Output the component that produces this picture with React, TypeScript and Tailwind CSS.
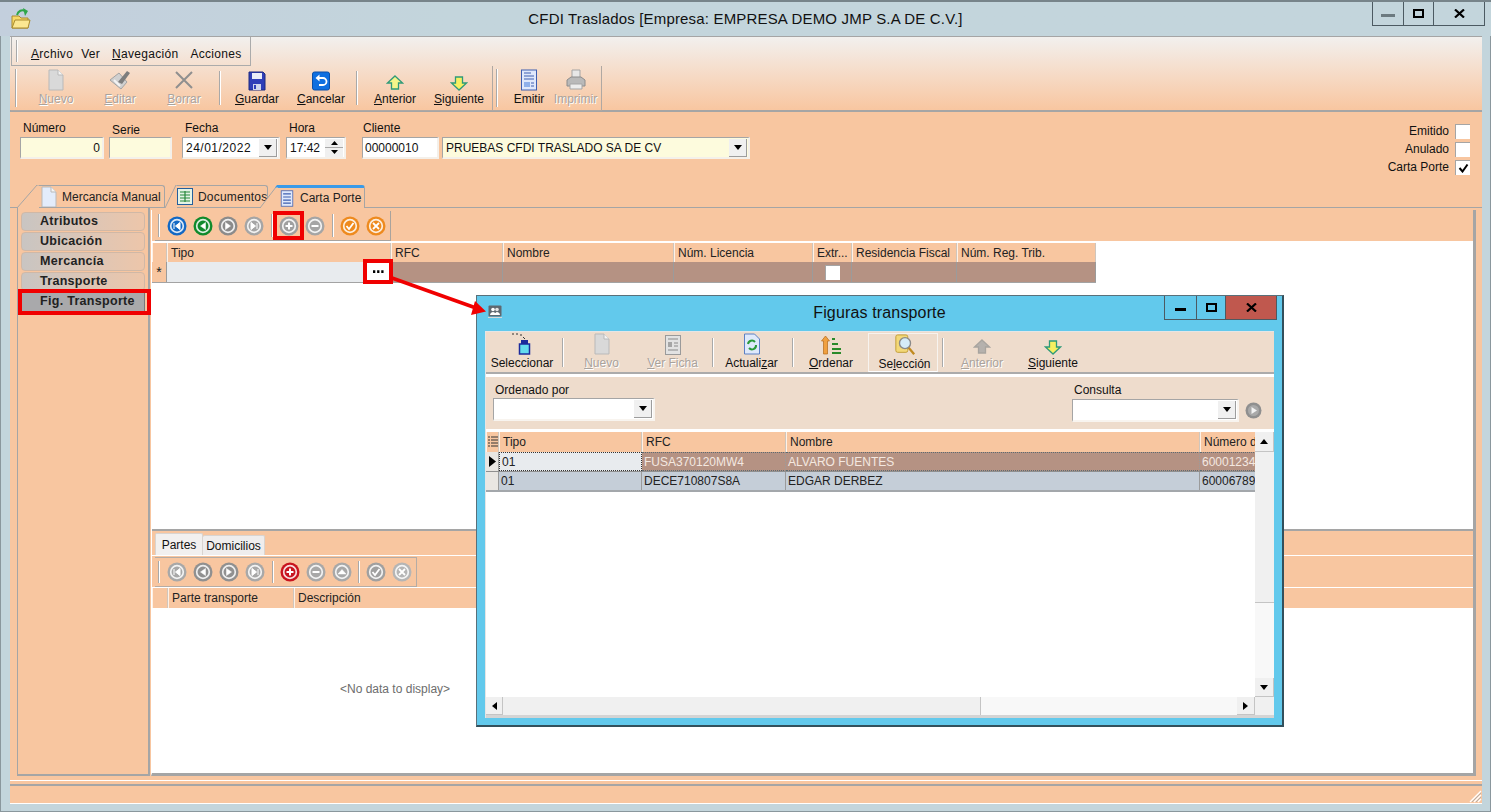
import React from "react";

const FONT = "font-['Liberation_Sans',Arial,sans-serif]";

/* ---------- small drawings ---------- */

const PageIcon = ({ c = "#d9d9d9" }: { c?: string }) => (
  <svg width="20" height="22" viewBox="0 0 20 22" className="shrink-0">
    <path d="M3 1h9l5 5v15H3z" fill={c} stroke="#b9b9b9" />
    <path d="M12 1v5h5" fill="#f5f5f5" stroke="#b9b9b9" />
  </svg>
);

const EditIcon = () => (
  <svg width="22" height="22" viewBox="0 0 22 22">
    <path d="M1 11l9-7 8 9-6 7z" fill="#d0d0d0" stroke="#a3a3a3" />
    <path d="M9 13l9-11 3 2-8 11z" fill="#7d7d7d" />
    <path d="M5 11l6 6" stroke="#f4f4f4" strokeWidth="2" />
  </svg>
);

const CrossIcon = () => (
  <svg width="22" height="22" viewBox="0 0 22 22">
    <path d="M3 3l16 16M19 3L3 19" stroke="#8f8f8f" strokeWidth="2" />
  </svg>
);

const FloppyIcon = () => (
  <svg width="18" height="20" viewBox="0 0 18 20">
    <path d="M1 1h14l2 2v16H1z" fill="#2f3fb8" stroke="#1d2a80" />
    <rect x="4" y="2" width="10" height="6" fill="#e9edf8" />
    <rect x="5" y="13" width="8" height="6" fill="#cfd6ec" />
    <rect x="6" y="14" width="2" height="4" fill="#2f3fb8" />
  </svg>
);

const UndoIcon = () => (
  <svg width="18" height="20" viewBox="0 0 18 20">
    <rect x="0.5" y="1" width="17" height="18" rx="2" fill="#0f6fe0" stroke="#0b4fa8" />
    <path d="M6 7h5a3 3 0 0 1 0 7H7" fill="none" stroke="#fff" strokeWidth="1.8" />
    <path d="M7.5 3.5v7L3.5 7z" fill="#fff" />
  </svg>
);

const UpArrow = ({ fill = "#f5f58a", line = "#2e9a78" }: { fill?: string; line?: string }) => (
  <svg width="18" height="16" viewBox="0 0 18 16">
    <path d="M9 1l7.5 7H12.5v6h-7V8H1.500z" fill={fill} stroke={line} strokeWidth="1.300" />
  </svg>
);

const DownArrow = () => (
  <svg width="18" height="16" viewBox="0 0 18 16">
    <path d="M9 15L1.500 8H5.500V2h7v6h4z" fill="#f7f060" stroke="#2e9a78" strokeWidth="1.300" />
  </svg>
);

const EmitIcon = () => (
  <svg width="18" height="22" viewBox="0 0 18 22">
    <rect x="1.500" y="1" width="15" height="20" fill="#dfe8fb" stroke="#3e5eb0" />
    <path d="M4 4h7M4 7h10M4 10h10" stroke="#3e5eb0" />
    <rect x="4" y="13" width="6" height="5" fill="#8fb0ea" />
    <path d="M11 14h3M11 17h3" stroke="#3e5eb0" />
  </svg>
);

const PrinterIcon = () => (
  <svg width="24" height="22" viewBox="0 0 24 22">
    <path d="M8 1h8v8H8z" fill="#e7e7e7" stroke="#a5a5a5" />
    <path d="M3 11l4-3h10l4 3v6H3z" fill="#b9b9b9" stroke="#8c8c8c" />
    <path d="M6 15h12v5H6z" fill="#ececec" stroke="#a5a5a5" />
  </svg>
);

const SelectIcon = () => (
  <svg width="24" height="22" viewBox="0 0 24 22">
    <path d="M2 1h2M6 1h2M10 2h2M13 4l2 2" stroke="#333" strokeWidth="1" />
    <rect x="11" y="7" width="7" height="4" fill="#1b2a9c" />
    <rect x="9.500" y="11" width="10" height="10" fill="#64dcee" stroke="#1b2a9c" strokeWidth="1.500" />
  </svg>
);

const FichaIcon = () => (
  <svg width="16" height="20" viewBox="0 0 16 20">
    <rect x="0.500" y="0.500" width="15" height="19" fill="#e2e2e2" stroke="#9a9a9a" />
    <path d="M3 4h10M3 15h10M9 8h4M9 11h4" stroke="#8a8a8a" />
    <rect x="3" y="7" width="4" height="5" fill="#a5a5a5" />
  </svg>
);

const RefreshIcon = () => (
  <svg width="18" height="22" viewBox="0 0 18 22">
    <path d="M1.500 1h10l5 5v15h-15z" fill="#dfe9fb" stroke="#5c80c4" />
    <path d="M5 11a4 4 0 0 1 7-2" fill="none" stroke="#2a9a3a" strokeWidth="2" />
    <path d="M13 12a4 4 0 0 1-7 3" fill="none" stroke="#2a9a3a" strokeWidth="2" />
  </svg>
);

const SortIcon = () => (
  <svg width="22" height="20" viewBox="0 0 22 20">
    <path d="M5.500 1l4 5H7.500v13h-4V6h-2z" fill="#f0a040" stroke="#b46a18" strokeWidth="0.700" />
    <path d="M12 4h3M12 9h6M12 14h9M12 18h9" stroke="#2a8a2a" strokeWidth="2" />
  </svg>
);

const FindIcon = () => (
  <svg width="22" height="22" viewBox="0 0 22 24">
    <rect x="1" y="1" width="13" height="19" rx="2" fill="#f3d878" stroke="#c09a30" />
    <circle cx="11" cy="10" r="6" fill="#d5ecf8" stroke="#8a8a8a" strokeWidth="1.500" />
    <path d="M15 15l6 7" stroke="#c08a20" strokeWidth="2.500" />
  </svg>
);

const FolderIcon = () => (
  <svg width="20" height="22" viewBox="0 0 20 22">
    <path d="M1 8h7l2 2h7v10H1z" fill="#f7d866" stroke="#a98a2c" />
    <path d="M1 20l3-8h15l-2 8z" fill="#fbe792" stroke="#a98a2c" />
    <path d="M6 7c1-4 5-6 8-4" fill="none" stroke="#2fa64a" strokeWidth="2" />
    <path d="M12 0l5 3-3 5z" fill="#2fa64a" />
  </svg>
);

const PeopleIcon = () => (
  <svg width="14" height="13" viewBox="0 0 14 13">
    <rect x="0.500" y="0.500" width="13" height="11" rx="1" fill="#5f6870" />
    <circle cx="5" cy="4.500" r="1.800" fill="#fff" />
    <circle cx="9" cy="4.500" r="1.800" fill="#e4e4e4" />
    <path d="M2 10c0-2 2-3 3-3s3 1 3 3zM7 10c0-2 1-3 2-3s3 1 3 3z" fill="#fff" />
    <path d="M0 12.500h14" stroke="#d8d8d8" />
  </svg>
);

const TableDocIcon = () => (
  <svg width="16" height="17" viewBox="0 0 16 17" className="shrink-0">
    <rect x="0.500" y="0.500" width="15" height="16" fill="#e5f3e5" stroke="#255f9c" />
    <path d="M3 4h10M3 7h10M3 10h10M3 13h10M8 3v11" stroke="#27873a" strokeWidth="1.200" />
  </svg>
);

const Caret = ({ dir = "down" }: { dir?: "down" | "up" | "left" | "right" }) => {
  const d = { down: "M0 0h8L4 5z", up: "M0 5h8L4 0z", left: "M5 0v8L0 4z", right: "M0 0v8l5-4z" }[dir];
  const vert = dir === "down" || dir === "up";
  return (
    <svg width={vert ? 8 : 5} height={vert ? 5 : 8} viewBox={vert ? "0 0 8 5" : "0 0 5 8"}>
      <path d={d} fill="#000" />
    </svg>
  );
};

type Glyph = "first" | "prev" | "next" | "last" | "plus" | "minus" | "up" | "check" | "x";

const Ball = ({ base, glyph, ring = "#fff" }: { base: string; glyph: Glyph; ring?: string }) => (
  <svg width="20" height="20" viewBox="0 0 20 20" className="shrink-0">
    <circle cx="10" cy="10" r="9.500" fill={base} />
    <circle cx="10" cy="10" r="6.300" fill="none" stroke={ring} strokeWidth="1.700" opacity="0.850" />
    <g fill="#fff" stroke="#fff">
      {glyph === "first" && <path d="M7 7v6M13 6.500v7L8.500 10z" strokeWidth="1" />}
      {glyph === "prev" && <path d="M12.500 6.500v7L7.500 10z" strokeWidth="0.500" />}
      {glyph === "next" && <path d="M7.500 6.500v7l5-3.500z" strokeWidth="0.500" />}
      {glyph === "last" && <path d="M13 7v6M7 6.500v7l4.500-3.500z" strokeWidth="1" />}
      {glyph === "plus" && <path d="M6.500 10h7M10 6.500v7" strokeWidth="2" />}
      {glyph === "minus" && <path d="M6.500 10h7" strokeWidth="2" />}
      {glyph === "up" && <path d="M6 12l4-4.500 4 4.500z" strokeWidth="0.500" />}
      {glyph === "check" && <path d="M6.500 10l2.500 3 4.500-6" strokeWidth="1.800" fill="none" />}
      {glyph === "x" && <path d="M7 7l6 6M13 7l-6 6" strokeWidth="1.800" fill="none" />}
    </g>
  </svg>
);

/* ---------- toolbar pieces ---------- */

const Grip = () => <div className="w-[2px] h-[calc(100%-6px)] my-auto border-l border-[#a9a9a9] bg-white shrink-0" />;
const Sep = ({ className = "" }: { className?: string }) => (
  <div className={`w-[2px] self-stretch my-[5px] border-l border-[#a9a9a9] bg-white shrink-0 ${className}`} />
);

const ToolBtn = ({
  icon,
  label,
  u,
  off,
  tight,
  className = "",
}: {
  icon: React.ReactNode;
  label: string;
  u?: number;
  off?: boolean;
  tight?: boolean;
  className?: string;
}) => (
  <div className={`flex flex-col items-center shrink-0 ${className}`}>
    <div className={`flex items-end justify-center ${tight ? "h-[22px]" : "h-[25px]"}`}>{icon}</div>
    <span
      className={`text-[12px] leading-[14px] mt-[1px] whitespace-nowrap ${off ? "text-[#a9a39d] [text-shadow:1px_1px_0_#fff]" : "text-[#111]"}`}
    >
      {u === undefined ? (
        label
      ) : (
        <>
          {label.slice(0, u)}
          <u>{label[u]}</u>
          {label.slice(u + 1)}
        </>
      )}
    </span>
  </div>
);

const DropBtn = () => (
  <div className="w-[18px] h-[18px] bg-[#f0f0f0] border-r border-b border-[#9d9d9d] flex items-center justify-center shrink-0">
    <Caret />
  </div>
);

const Field = ({
  label,
  className = "",
  labelClass = "",
  children,
}: {
  label: string;
  className?: string;
  labelClass?: string;
  children: React.ReactNode;
}) => (
  <div className={`flex flex-col shrink-0 ${className}`}>
    <span className={`text-[12px] leading-[14px] h-[16px] text-[#111] pl-[3px] ${labelClass}`}>{label}</span>
    {children}
  </div>
);

const inputBox = "h-[22px] border-t border-l border-[#a5a5a5] border-r-2 border-b-2 border-r-[#f4f0ea] border-b-[#f4f0ea] flex items-center text-[12px] text-[#111]";

const Check = ({ label, on }: { label: string; on?: boolean }) => (
  <div className="flex items-center justify-end gap-[6px] h-[18px]">
    <span className="text-[12px] text-[#111]">{label}</span>
    <div className="w-[15px] h-[15px] bg-white border-t border-l border-[#a5a5a5] flex items-center justify-center">
      {on && (
        <svg width="11" height="10" viewBox="0 0 11 10">
          <path d="M1.500 5l3 3.500 5-7" fill="none" stroke="#000" strokeWidth="2" />
        </svg>
      )}
    </div>
  </div>
);

const NavItem = ({ label, active }: { label: string; active?: boolean }) => (
  <div
    className={`flex items-center pl-[18px] text-[12.500px] font-bold text-[#222] tracking-[0.3px] ${
      active
        ? "bg-[#a9a9ab] h-[21px] -mt-px border border-[#77777a]"
        : "h-[19px] rounded-[4px] bg-gradient-to-r from-[#c9c5c2] to-[#edc6aa] border border-[#d0b8a6]"
    }`}
  >
    {label}
  </div>
);

const HeadCell = ({ className = "", children }: { className?: string; children?: React.ReactNode }) => (
  <div className={`h-full shrink-0 border-l border-r border-l-[#fff1e5] border-r-[#cfc6bd] pl-[3px] flex items-center text-[12px] text-[#222] whitespace-nowrap overflow-hidden ${className}`}>
    {children}
  </div>
);

const RowCell = ({ className = "", children }: { className?: string; children?: React.ReactNode }) => (
  <div className={`h-full shrink-0 border-r border-[#9b9b9b] flex items-center text-[12px] whitespace-nowrap overflow-hidden pl-[2px] ${className}`}>
    {children}
  </div>
);

const WinBtn = ({ className = "", children }: { className?: string; children: React.ReactNode }) => (
  <div className={`flex items-center justify-center border border-[#4c5a62] -ml-px ${className}`}>{children}</div>
);

const CloseGlyph = () => (
  <svg width="11" height="9" viewBox="0 0 11 9">
    <path d="M1 0.500l9 8M10 0.500l-9 8" stroke="#000" strokeWidth="2.200" />
  </svg>
);

const ScrollBtn = ({ dir, className = "" }: { dir: "up" | "down" | "left" | "right"; className?: string }) => (
  <div className={`bg-[#f0f0f0] border-r border-b border-[#c4c4c4] flex items-center justify-center shrink-0 ${className}`}>
    <Caret dir={dir} />
  </div>
);

/* ---------- dialog ---------- */

const FigurasDialog = () => (
  <div className="absolute left-[476px] top-[293px] w-[808px] h-[432px] bg-[#62c9ec] border-t border-l border-[#59707a] border-r-2 border-b-2 border-r-[#33505c] border-b-[#33505c] flex flex-col z-10">
    <div className="h-[35px] shrink-0 grid grid-cols-[1fr_auto_1fr] items-start">
      <div className="pl-[11px] pt-[9px]">
        <PeopleIcon />
      </div>
      <div className="text-[16px] leading-[20px] pt-[7px] text-[#111] tracking-[0.15px]">Figuras transporte</div>
      <div className="flex justify-end pr-[5px]">
        <WinBtn className="w-[33px] h-[24px] border-t-0">
          <div className="w-[11px] h-[3px] bg-black mt-[4px]" />
        </WinBtn>
        <WinBtn className="w-[30px] h-[24px] border-t-0">
          <div className="w-[11px] h-[9px] border-2 border-black" />
        </WinBtn>
        <WinBtn className="w-[52px] h-[24px] border-t-0 bg-[#c0584e]">
          <CloseGlyph />
        </WinBtn>
      </div>
    </div>
    <div className="flex-1 mx-[8px] mb-[7px] flex flex-col bg-white border-l border-t border-[#e5e5e5]">
      <div className="h-[42px] shrink-0 bg-[#eedccc] border-b-2 border-[#ababab] flex pl-[1px] pt-[1px]">
        <ToolBtn tight className="w-[70px]" icon={<SelectIcon />} label="Seleccionar" />
        <Sep className="my-[2px] ml-[5px]" />
        <ToolBtn tight className="w-[75px]" icon={<PageIcon />} label="Nuevo" u={0} off />
        <ToolBtn tight className="w-[67px]" icon={<FichaIcon />} label="Ver Ficha" u={0} off />
        <Sep className="my-[2px] ml-[6px]" />
        <ToolBtn tight className="w-[75px]" icon={<RefreshIcon />} label="Actualizar" u={7} />
        <Sep className="my-[2px] ml-[3px]" />
        <ToolBtn tight className="w-[74px]" icon={<SortIcon />} label="Ordenar" u={0} />
        <ToolBtn tight className="w-[70px] pl-[3px] border border-[#f7f3ef] border-b-white" icon={<FindIcon />} label="Selección" u={2} />
        <Sep className="my-[2px] ml-[4px]" />
        <ToolBtn tight className="w-[76px]" icon={<UpArrow fill="#b5b1ad" line="#a8a49f" />} label="Anterior" u={0} off />
        <ToolBtn tight className="w-[66px]" icon={<DownArrow />} label="Siguiente" u={0} />
      </div>
      <div className="h-[52px] mt-[3px] shrink-0 bg-[#eedccc] flex justify-between pl-[7px] pr-[12px] pt-[6px]">
        <div className="flex flex-col">
          <span className="text-[12px] leading-[14px] h-[15px] text-[#111] pl-[2px]">Ordenado por</span>
          <div className="w-[162px] h-[23px] bg-white border-t border-l border-[#a5a5a5] border-r-2 border-b-2 border-r-[#f8f4ef] border-b-[#f8f4ef] flex justify-end items-center pr-[1px]">
            <DropBtn />
          </div>
        </div>
        <div className="flex items-start gap-[6px]">
          <div className="flex flex-col">
            <span className="text-[12px] leading-[14px] h-[16px] text-[#111] pl-[2px]">Consulta</span>
            <div className="w-[167px] h-[23px] bg-white border-t border-l border-[#a5a5a5] border-r-2 border-b-2 border-r-[#f8f4ef] border-b-[#f8f4ef] flex justify-end items-center pr-[1px]">
              <DropBtn />
            </div>
          </div>
          <div className="mt-[19px]">
            <svg width="17" height="17" viewBox="0 0 17 17">
              <circle cx="8.500" cy="8.500" r="8" fill="#8f8f8f" />
              <circle cx="8.500" cy="8.500" r="5.500" fill="#a9a9a9" />
              <path d="M6.500 5v7l5.500-3.500z" fill="#f2f2f2" />
            </svg>
          </div>
        </div>
      </div>
      <div className="flex-1 mt-[3px] grid grid-cols-[1fr_19px] grid-rows-[1fr_18px] border-b-[3px] border-[#d4d4d4] min-h-0">
        <div className="min-w-0 overflow-hidden flex flex-col">
          <div className="h-[20px] bg-[#f8c6a0] flex shrink-0">
            <HeadCell className="w-[13px] !pl-[1px]">
              <svg width="10" height="12" viewBox="0 0 10 12">
                <path d="M0 1h2M3 1h7M0 4h2M3 4h7M0 7h2M3 7h7M0 10h2M3 10h7" stroke="#333" strokeWidth="1.200" />
              </svg>
            </HeadCell>
            <HeadCell className="w-[143px]">Tipo</HeadCell>
            <HeadCell className="w-[144px]">RFC</HeadCell>
            <HeadCell className="w-[414px]">Nombre</HeadCell>
            <HeadCell className="w-[60px]">Número de licencia</HeadCell>
          </div>
          <div className="h-[20px] flex shrink-0 bg-[#b59283] text-[#f4e8e0] border-b border-[#8f8f8f]">
            <RowCell className="w-[13px] bg-[#e9e6e2] !pl-[3px]">
              <svg width="7" height="11" viewBox="0 0 7 11">
                <path d="M0 0v11l7-5.500z" fill="#000" />
              </svg>
            </RowCell>
            <RowCell className="w-[143px] bg-[#e8ebee] text-[#222] border border-dotted border-[#333]">01</RowCell>
            <RowCell className="w-[144px] border-y border-y-[#5f6b70] border-dotted">FUSA370120MW4</RowCell>
            <RowCell className="w-[414px] border-y border-y-[#5f6b70] border-dotted">ALVARO FUENTES</RowCell>
            <RowCell className="w-[60px] border-y border-y-[#5f6b70] border-dotted">600012345</RowCell>
          </div>
          <div className="h-[20px] flex shrink-0 bg-[#c5ced8] text-[#222] border-b-2 border-[#a3a7ab]">
            <RowCell className="w-[13px] bg-[#e9e6e2]" />
            <RowCell className="w-[143px]">01</RowCell>
            <RowCell className="w-[144px]">DECE710807S8A</RowCell>
            <RowCell className="w-[414px]">EDGAR DERBEZ</RowCell>
            <RowCell className="w-[60px]">600067890</RowCell>
          </div>
        </div>
        <div className="row-span-1 flex flex-col bg-[#f8f8f8]">
          <ScrollBtn dir="up" className="h-[20px]" />
          <div className="h-[151px] bg-[#f0f0f0] border-b border-[#c4c4c4]" />
          <div className="flex-1" />
          <ScrollBtn dir="down" className="h-[19px]" />
        </div>
        <div className="flex bg-[#f8f8f8]">
          <ScrollBtn dir="left" className="w-[17px]" />
          <div className="w-[478px] bg-[#f0f0f0] border-r border-[#c4c4c4]" />
          <div className="flex-1" />
          <ScrollBtn dir="right" className="w-[18px]" />
        </div>
        <div className="bg-[#f0f0f0]" />
      </div>
    </div>
  </div>
);

/* ---------- main window ---------- */

export default function App() {
  return (
    <div className={`${FONT} relative w-[1491px] h-[812px] overflow-hidden bg-[#c3d5dc] flex flex-col border-t-2 border-[#77848a] shadow-[inset_1px_0_0_#8a979d,inset_-1px_0_0_#8a979d,inset_0_-1px_0_#8a979d]`}>
      {/* Title bar */}
      <header className="h-[34px] shrink-0 grid grid-cols-[1fr_auto_1fr] items-start bg-gradient-to-r from-[#c3cfdd] to-[#c3d5dc] to-[30%]">
        <div className="pl-[11px] pt-[6px]">
          <FolderIcon />
        </div>
        <div className="text-[15px] leading-[20px] pt-[7px] text-[#111] tracking-[0.17px]">
          CFDI Traslados [Empresa: EMPRESA DEMO JMP S.A DE C.V.]
        </div>
        <div className="flex justify-end pr-[6px]">
          <WinBtn className="w-[32px] h-[24px] border-t-0">
            <div className="w-[14px] h-[3px] bg-[#6c7a80] mt-[4px]" />
          </WinBtn>
          <WinBtn className="w-[31px] h-[24px] border-t-0">
            <div className="w-[11px] h-[9px] border-2 border-black" />
          </WinBtn>
          <WinBtn className="w-[52px] h-[24px] border-t-0">
            <CloseGlyph />
          </WinBtn>
        </div>
      </header>

      <div className="flex-1 min-h-0 ml-[10px] mr-[9px] flex flex-col">
        {/* Menu + toolbars */}
        <div className="h-[76px] shrink-0 bg-gradient-to-b from-[#f2f0ee] to-[#f8c6a0] border-t border-b-2 border-[#a5a5a5]">
          <div className="w-[240px] h-[29px] ml-[1px] border border-t-0 border-[#ababab] flex items-center text-[12px] text-[#111] tracking-[0.3px] pl-[4px]">
            <div className="w-[2px] h-[22px] border-l border-[#a9a9a9] bg-white mr-[13px]" />
            <span className="mr-[8px] pt-[5px]">
              <u>A</u>rchivo
            </span>
            <span className="mr-[12px] pt-[5px]">Ver</span>
            <span className="mr-[12px] pt-[5px]">
              <u>N</u>avegación
            </span>
            <span className="pt-[5px]">Acciones</span>
          </div>
          <div className="flex h-[45px] w-[591px] ml-[1px]">
            <div className="flex w-[482px] border-r border-b border-[#b0a8a2] pl-[4px]">
              <Grip />
              <div className="w-[7px]" />
              <ToolBtn className="w-[64px]" icon={<PageIcon />} label="Nuevo" u={0} off />
              <ToolBtn className="w-[64px]" icon={<EditIcon />} label="Editar" u={0} off />
              <ToolBtn className="w-[64px]" icon={<CrossIcon />} label="Borrar" u={0} off />
              <div className="w-[3px]" />
              <Sep />
              <div className="w-[4px]" />
              <ToolBtn className="w-[64px]" icon={<FloppyIcon />} label="Guardar" u={0} />
              <ToolBtn className="w-[64px]" icon={<UndoIcon />} label="Cancelar" u={0} />
              <div className="w-[3px]" />
              <Sep />
              <div className="w-[5px]" />
              <ToolBtn className="w-[64px]" icon={<UpArrow />} label="Anterior" u={0} />
              <ToolBtn className="w-[64px]" icon={<DownArrow />} label="Siguiente" u={0} />
            </div>
            <div className="flex w-[109px] border-r border-b border-[#b0a8a2] pl-[3px]">
              <Grip />
              <div className="w-[8px]" />
              <ToolBtn className="w-[46px]" icon={<EmitIcon />} label="Emitir" />
              <ToolBtn className="w-[47px]" icon={<PrinterIcon />} label="Imprimir" off />
            </div>
          </div>
        </div>

        {/* Header form */}
        <div className="flex-1 min-h-0 bg-[#f8c6a0] flex flex-col">
          <div className="h-[73px] shrink-0 flex items-start pt-[9px] pl-[10px] pr-[12px]">
            <Field label="Número" className="w-[84px]">
              <div className={`${inputBox} bg-[#fdfbdd] justify-end pr-[2px]`}>0</div>
            </Field>
            <Field label="Serie" className="w-[63px] ml-[5px]" labelClass="pt-[2px]">
              <div className={`${inputBox} bg-[#fdfbdd]`} />
            </Field>
            <Field label="Fecha" className="w-[98px] ml-[10px]">
              <div className={`${inputBox} bg-white pl-[3px] justify-between pr-[1px] tracking-[0.5px]`}>
                24/01/2022
                <DropBtn />
              </div>
            </Field>
            <Field label="Hora" className="w-[60px] ml-[6px]">
              <div className={`${inputBox} bg-white pl-[3px] justify-between pr-[1px]`}>
                17:42
                <div className="flex flex-col w-[18px] shrink-0">
                  <div className="h-[9px] bg-[#f0f0f0] border-b border-[#a9a9a9] flex items-center justify-center">
                    <svg width="7" height="4" viewBox="0 0 7 4">
                      <path d="M0 4h7L3.500 0z" fill="#000" />
                    </svg>
                  </div>
                  <div className="h-[9px] bg-[#f0f0f0] flex items-center justify-center">
                    <svg width="7" height="4" viewBox="0 0 7 4">
                      <path d="M0 0h7L3.500 4z" fill="#000" />
                    </svg>
                  </div>
                </div>
              </div>
            </Field>
            <Field label="Cliente" className="w-[77px] ml-[16px]" labelClass="!pl-[1px]">
              <div className={`${inputBox} bg-white pl-[2px]`}>00000010</div>
            </Field>
            <Field label="&nbsp;" className="w-[308px] ml-[3px]">
              <div className={`${inputBox} bg-[#fdfbdd] pl-[3px] justify-between pr-[1px]`}>
                PRUEBAS CFDI TRASLADO SA DE CV
                <DropBtn />
              </div>
            </Field>
            <div className="ml-auto flex flex-col mt-[1px]">
              <Check label="Emitido" />
              <Check label="Anulado" />
              <Check label="Carta Porte" on />
            </div>
          </div>

          {/* Tabs */}
          <div className="h-[23px] shrink-0 flex items-stretch pl-[7px] border-b border-[#a5a5a5] text-[12px] text-[#222]">
            <div className="flex">
              <svg width="22" height="23" viewBox="0 0 22 23" className="shrink-0">
                <path d="M0 23L20 0h2v23z" fill="#f8c6a0" />
                <path d="M0 23L20 0h2" fill="none" stroke="#a5a5a5" />
              </svg>
              <div className="w-[126px] border-t border-r border-[#a5a5a5] rounded-tr-[3px] flex items-center gap-[3px] whitespace-nowrap overflow-hidden">
                <PageIcon c="#e3ecfb" />
                Mercancía Manual
              </div>
            </div>
            <div className="flex">
              <svg width="12" height="23" viewBox="0 0 12 23" className="shrink-0">
                <path d="M0 23L11 0h1v23z" fill="#f8c6a0" />
                <path d="M0 23L11 0h1" fill="none" stroke="#a5a5a5" />
              </svg>
              <div className="w-[91px] border-t border-r border-[#a5a5a5] rounded-tr-[3px] flex items-center gap-[5px] tracking-[0.2px] whitespace-nowrap overflow-hidden">
                <TableDocIcon />
                Documentos
              </div>
            </div>
            <div className="flex -ml-[8px] relative">
              <svg width="18" height="23" viewBox="0 0 18 23" className="shrink-0">
                <path d="M0 23L17 1h1v22z" fill="#f8c6a0" />
                <path d="M0 23L16 2" fill="none" stroke="#a5a5a5" />
                <path d="M15 2.500L17 0h1v2.500z" fill="#3a9ae8" />
              </svg>
              <div className="w-[87px] border-t-[3px] border-t-[#3a9ae8] border-r border-r-[#a5a5a5] rounded-tr-[3px] flex items-center gap-[6px] pl-[2px] whitespace-nowrap bg-[#f8c6a0] -mb-px">
                <svg width="14" height="17" viewBox="0 0 18 22" className="shrink-0">
                  <rect x="1.500" y="1" width="15" height="20" fill="#dfe8fb" stroke="#3e5eb0" />
                  <path d="M4 5h10M4 9h10M4 13h10M4 17h10" stroke="#3e5eb0" strokeWidth="1.500" />
                </svg>
                Carta Porte
              </div>
            </div>
          </div>

          {/* Content: side nav + panel */}
          <div className="h-[568px] shrink-0 flex pl-[7px] pr-[6px]">
            <nav className="w-[133px] shrink-0 border-l border-r-2 border-b-2 border-[#a5a5a5] px-[3px] pt-[4px] flex flex-col gap-[1px]">
              <NavItem label="Atributos" />
              <NavItem label="Ubicación" />
              <NavItem label="Mercancía" />
              <NavItem label="Transporte" />
              <NavItem label="Fig. Transporte" active />
            </nav>

            <div className="flex-1 min-w-0 ml-[1px] mt-[2px] flex flex-col bg-white border-l border-l-white border-r-[3px] border-b-[3px] border-r-[#a5a5a5] border-b-[#a5a5a5]">
              {/* Upper grid */}
              <div className="flex-1 min-h-0 flex flex-col">
                <div className="h-[33px] shrink-0 bg-[#f8c6a0] border-b-2 border-white pt-[1px]">
                  <div className="w-[236px] h-[30px] ml-[3px] pl-[3px] flex items-center gap-[6px] border-r border-b border-[#a9a39d]">
                    <Grip />
                    <div className="flex items-center gap-[5.500px] ml-[1px]">
                      <Ball base="#1268c4" glyph="first" />
                      <Ball base="#108a2c" glyph="prev" />
                      <Ball base="#8b8b8b" glyph="next" />
                      <Ball base="#a5a5a5" glyph="last" />
                    </div>
                    <Sep className="!my-[3px] ml-[1.500px]" />
                    <div className="flex items-center gap-[5.500px]">
                      <Ball base="#9f9f9f" glyph="plus" />
                      <Ball base="#a5a5a5" glyph="minus" />
                    </div>
                    <Sep className="!my-[3px] ml-[1.500px]" />
                    <div className="flex items-center gap-[5.500px]">
                      <Ball base="#ee8a1e" glyph="check" />
                      <Ball base="#ee8a1e" glyph="x" />
                    </div>
                  </div>
                </div>
                <div className="w-[944px] shrink-0">
                  <div className="h-[19px] bg-[#f8c6a0] flex">
                    <HeadCell className="w-[15px]" />
                    <HeadCell className="w-[224px]">Tipo</HeadCell>
                    <HeadCell className="w-[112px]">RFC</HeadCell>
                    <HeadCell className="w-[171px]">Nombre</HeadCell>
                    <HeadCell className="w-[139px]">Núm. Licencia</HeadCell>
                    <HeadCell className="w-[39px]">Extr...</HeadCell>
                    <HeadCell className="w-[105px]">Residencia Fiscal</HeadCell>
                    <HeadCell className="w-[139px]">Núm. Reg. Trib.</HeadCell>
                  </div>
                  <div className="h-[21px] flex bg-[#b59283] border-b border-[#a3a3a3]">
                    <RowCell className="w-[15px] bg-[#f8c6a0] justify-center !pl-0 text-[#222] text-[14px]">*</RowCell>
                    <RowCell className="w-[224px] bg-[#e8ebee]" />
                    <RowCell className="w-[112px]" />
                    <RowCell className="w-[171px]" />
                    <RowCell className="w-[139px]" />
                    <RowCell className="w-[39px] justify-center !pl-0">
                      <div className="w-[15px] h-[15px] bg-white border-t border-l border-[#a5a5a5]" />
                    </RowCell>
                    <RowCell className="w-[105px]" />
                    <RowCell className="w-[139px]" />
                  </div>
                </div>
              </div>

              {/* Lower grid */}
              <div className="h-[244px] shrink-0 flex flex-col border-t-2 border-[#a5a5a5]">
                <div className="h-[24px] shrink-0 bg-[#f8c6a0] flex items-end pl-[3px] text-[12px] text-[#111]">
                  <div className="w-[48px] h-[22px] bg-[#f2f0ef] border border-b-0 border-[#d9d4d0] rounded-t-[2px] flex items-center justify-center">Partes</div>
                  <div className="w-[62px] h-[20px] bg-[#efeded] border-t border-r border-[#d9d4d0] rounded-t-[2px] flex items-center justify-center">Domicilios</div>
                </div>
                <div className="h-[32px] shrink-0 bg-[#f8c6a0] border-t border-white pt-[1px]">
                  <div className="w-[262px] h-[30px] ml-[3px] pl-[3px] flex items-center gap-[6px] border-t border-r border-b border-[#b5aca5]">
                    <Grip />
                    <div className="flex items-center gap-[6px] ml-[1px]">
                      <Ball base="#a8a8a8" glyph="first" />
                      <Ball base="#909090" glyph="prev" />
                      <Ball base="#909090" glyph="next" />
                      <Ball base="#a8a8a8" glyph="last" />
                    </div>
                    <Sep className="!my-[3px] ml-[1px]" />
                    <div className="flex items-center gap-[6px]">
                      <Ball base="#c8141e" glyph="plus" />
                      <Ball base="#a8a8a8" glyph="minus" />
                      <Ball base="#a8a8a8" glyph="up" />
                    </div>
                    <Sep className="!my-[3px]" />
                    <div className="flex items-center gap-[6px]">
                      <Ball base="#a0a0a0" glyph="check" />
                      <Ball base="#b5b5b5" glyph="x" />
                    </div>
                  </div>
                </div>
                <div className="h-[21px] shrink-0 bg-[#f8c6a0] flex border-t border-white">
                  <HeadCell className="w-[16px]" />
                  <HeadCell className="w-[126px]">Parte transporte</HeadCell>
                  <HeadCell className="flex-1 border-r-0">Descripción</HeadCell>
                </div>
                <div className="flex-1 flex items-center pl-[188px] pb-[3px] text-[12px] text-[#6d6d6d]">&lt;No data to display&gt;</div>
              </div>
            </div>
          </div>

          {/* Status bar */}
          <div className="h-[5px] shrink-0 border-b border-white" />
          <div className="h-[20px] shrink-0 mt-[3px] border-t-2 border-[#a5a5a5] border-b border-b-white flex justify-end items-end">
            <svg width="15" height="15" viewBox="0 0 15 15">
              <path d="M14 3L3 14M14 7l-7 7M14 11l-3 3" stroke="#fff" strokeWidth="1.300" />
              <path d="M14 5l-9 9M14 9l-5 5" stroke="#b5b0aa" />
            </svg>
          </div>
        </div>
      </div>
      <div className="h-[8px] shrink-0" />

      <FigurasDialog />

      {/* Red annotations */}
      <div className="absolute left-[273px] top-[209px] w-[31px] h-[29px] border-[4px] border-[#f00000] z-20" />
      <div className="absolute left-[363px] top-[257px] w-[30px] h-[25px] border-[4px] border-[#f00000] bg-white z-20 flex items-center justify-center">
        <svg width="11" height="3" viewBox="0 0 12 3">
          <path d="M0 0h2.500v3H0zM4.500 0H7v3H4.500zM9 0h2.500v3H9z" fill="#000" />
        </svg>
      </div>
      <div className="absolute left-[18px] top-[287px] w-[133px] h-[26px] border-[4px] border-[#f00000] z-20" />
      <svg className="absolute left-[388px] top-[272px] z-20" width="102" height="44" viewBox="0 0 102 44">
        <path d="M4 4L88 34" stroke="#f00000" strokeWidth="3.500" />
        <path d="M98 37.500L83 41l4-14z" fill="#f00000" />
      </svg>
    </div>
  );
}
